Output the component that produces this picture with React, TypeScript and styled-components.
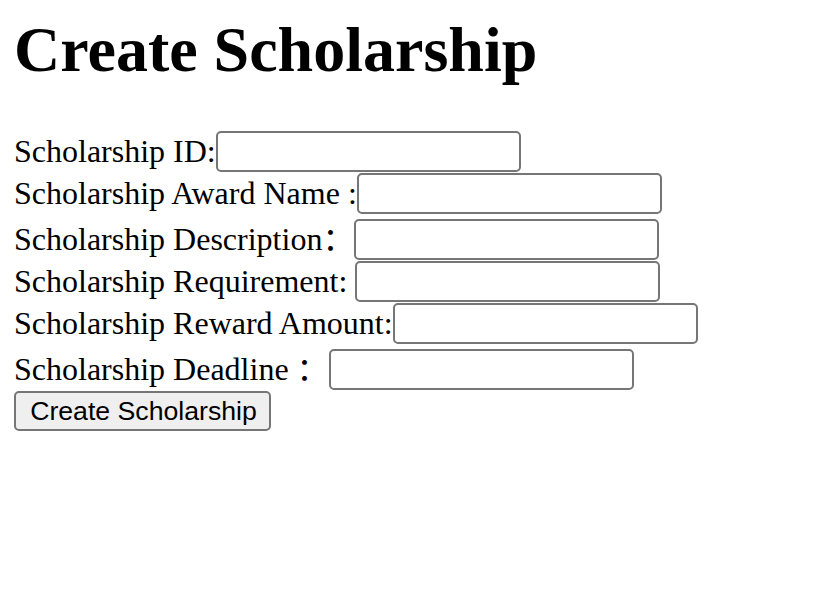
import React from "react";
import styled, { createGlobalStyle } from "styled-components";

const GlobalStyle = createGlobalStyle`
  html, body {
    margin: 0;
    padding: 0;
    background: #ffffff;
  }
  body {
    font-family: "Liberation Serif", "Noto Sans CJK SC", serif;
    color: #000000;
  }
`;

const Page = styled.div`
  padding: 14px;
`;

const Title = styled.h1`
  margin: 4px 0 49px;
  font-family: "Liberation Serif", serif;
  font-size: 64px;
  font-weight: bold;
  line-height: 64px;
  height: 64px;
`;

const Form = styled.form`
  display: flex;
  flex-direction: column;
  align-items: flex-start;
`;

const Row = styled.div<{ $tall?: boolean }>`
  display: flex;
  align-items: center;
  height: 42px;
  padding-top: ${(p) => (p.$tall ? "4px" : "0")};
  box-sizing: content-box;
`;

const Label = styled.label`
  font-family: "Liberation Serif", "Noto Sans CJK SC", serif;
  font-size: 32px;
  line-height: 32px;
  white-space: pre;
  margin-top: -1px;
  margin-bottom: 1px;
  align-self: center;
`;

const Field = styled.input`
  box-sizing: border-box;
  width: 305px;
  height: 41px;
  margin: 0 0 1px 0;
  padding: 2px 4px;
  border: 2px solid #767676;
  border-radius: 5px;
  background: #ffffff;
  font-family: "Liberation Sans", sans-serif;
  font-size: 26px;
  align-self: flex-start;
`;

const Submit = styled.button`
  box-sizing: border-box;
  width: 257px;
  height: 40px;
  margin: 0;
  padding: 0 0 0 2px;
  border: 2px solid #767676;
  border-radius: 5px;
  background: #efefef;
  color: #000000;
  font-family: "Liberation Sans", sans-serif;
  font-size: 26.67px;
  line-height: 1;
  cursor: pointer;
`;

const fields: { id: string; label: string; tall?: boolean }[] = [
  { id: "sid", label: "Scholarship ID:" },
  { id: "sname", label: "Scholarship Award Name :" },
  { id: "sdesc", label: "Scholarship Description：", tall: true },
  { id: "sreq", label: "Scholarship Requirement: " },
  { id: "samount", label: "Scholarship Reward Amount:" },
  { id: "sdeadline", label: "Scholarship Deadline ：", tall: true },
];

export default function App() {
  return (
    <>
      <GlobalStyle />
      <Page>
        <Title>Create Scholarship</Title>
        <Form onSubmit={(e) => e.preventDefault()}>
          {fields.map((f) => (
            <Row key={f.id} $tall={f.tall}>
              <Label htmlFor={f.id}>{f.label}</Label>
              <Field id={f.id} type="text" />
            </Row>
          ))}
          <Submit type="submit">Create Scholarship</Submit>
        </Form>
      </Page>
    </>
  );
}
